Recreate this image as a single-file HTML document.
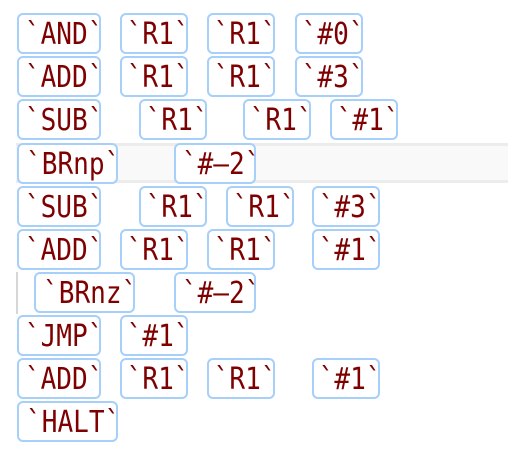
<!DOCTYPE html>
<html><head><meta charset="utf-8"><style>
html,body{margin:0;padding:0;background:#fff;width:508px;height:472px;overflow:hidden;position:relative}
.b{position:absolute;height:37px;border:2px solid #a6cffa;border-radius:6px;box-sizing:content-box;
font-family:"DejaVu Sans Mono","Liberation Mono",monospace;font-size:30px;line-height:39px;color:#7f0000;text-align:center;white-space:pre;background:#fff;overflow:visible}
.b span{display:inline-block;transform:scaleX(0.87);transform-origin:center}
.band{position:absolute;left:16px;top:143px;width:492px;height:40px;background:#f9f9f9;border-top:3px solid #ececec;border-bottom:3px solid #ececec;box-sizing:border-box}
.vl{position:absolute;left:16px;top:272px;width:2px;height:42px;background:#d6d6d6}
</style></head><body>
<div class="band"></div>
<div class="vl"></div>
<div class="b" style="left:17px;top:13px;width:80px"><span>`AND`</span></div>
<div class="b" style="left:120px;top:13px;width:64px"><span>`R1`</span></div>
<div class="b" style="left:207px;top:13px;width:64px"><span>`R1`</span></div>
<div class="b" style="left:295px;top:13px;width:64px"><span>`#0`</span></div>

<div class="b" style="left:17px;top:56px;width:80px"><span>`ADD`</span></div>
<div class="b" style="left:120px;top:56px;width:64px"><span>`R1`</span></div>
<div class="b" style="left:207px;top:56px;width:64px"><span>`R1`</span></div>
<div class="b" style="left:295px;top:56px;width:64px"><span>`#3`</span></div>

<div class="b" style="left:17px;top:99px;width:80px"><span>`SUB`</span></div>
<div class="b" style="left:139px;top:99px;width:64px"><span>`R1`</span></div>
<div class="b" style="left:243px;top:99px;width:64px"><span>`R1`</span></div>
<div class="b" style="left:330px;top:99px;width:64px"><span>`#1`</span></div>

<div class="b" style="left:17px;top:143px;width:97px"><span>`BRnp`</span></div>
<div class="b" style="left:174px;top:143px;width:78px"><span>`#–2`</span></div>

<div class="b" style="left:17px;top:186px;width:80px"><span>`SUB`</span></div>
<div class="b" style="left:139px;top:186px;width:64px"><span>`R1`</span></div>
<div class="b" style="left:226px;top:186px;width:64px"><span>`R1`</span></div>
<div class="b" style="left:312px;top:186px;width:64px"><span>`#3`</span></div>

<div class="b" style="left:17px;top:229px;width:80px"><span>`ADD`</span></div>
<div class="b" style="left:120px;top:229px;width:64px"><span>`R1`</span></div>
<div class="b" style="left:207px;top:229px;width:64px"><span>`R1`</span></div>
<div class="b" style="left:312px;top:229px;width:64px"><span>`#1`</span></div>

<div class="b" style="left:34px;top:272px;width:97px"><span>`BRnz`</span></div>
<div class="b" style="left:174px;top:272px;width:78px"><span>`#–2`</span></div>

<div class="b" style="left:17px;top:315px;width:80px"><span>`JMP`</span></div>
<div class="b" style="left:120px;top:315px;width:64px"><span>`#1`</span></div>

<div class="b" style="left:17px;top:358px;width:80px"><span>`ADD`</span></div>
<div class="b" style="left:120px;top:358px;width:64px"><span>`R1`</span></div>
<div class="b" style="left:207px;top:358px;width:64px"><span>`R1`</span></div>
<div class="b" style="left:312px;top:358px;width:64px"><span>`#1`</span></div>

<div class="b" style="left:17px;top:401px;width:97px"><span>`HALT`</span></div>
</body></html>
